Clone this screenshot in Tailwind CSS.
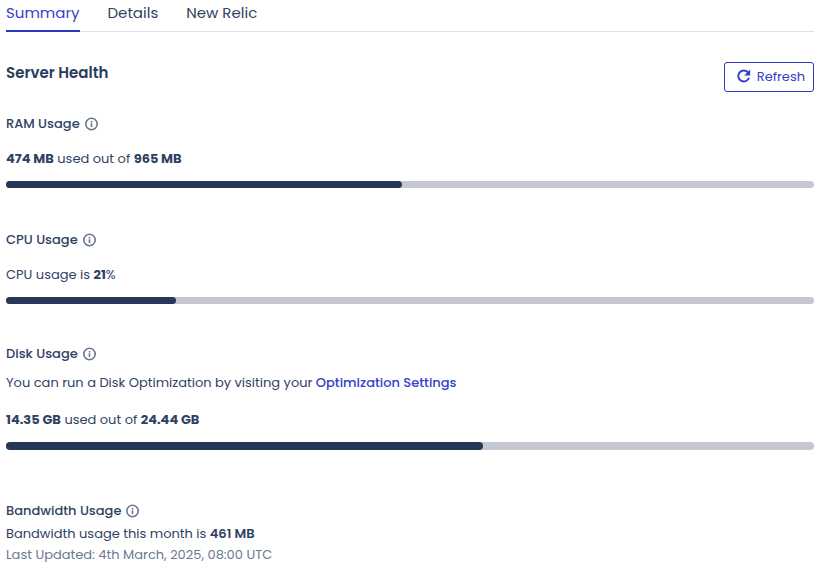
<!DOCTYPE html>
<html lang="en">
<head>
  <meta charset="UTF-8">
  <meta name="viewport" content="width=device-width, initial-scale=1.0">
  <title>Server Health</title>
  <script src="https://cdn.jsdelivr.net/npm/@tailwindcss/browser@4"></script>
</head>
<body class="bg-white pl-1.5 pr-[3px] font-[Poppins,Inter,sans-serif] text-[13px] leading-5 text-[#2f4263]">
  <svg class="hidden">
    <symbol id="info" viewBox="0 0 16 16">
      <circle cx="7.500" cy="8" r="5.700" fill="none" stroke="currentColor" stroke-width="1.600"/>
      <path fill="currentColor" d="M6.700 4.900h1.600v1.500H6.700zM6.700 7.300h1.600v3.800H6.700z"/>
    </symbol>
  </svg>

  <nav class="flex h-8 gap-7 border-b border-[#e0e1e6] text-[15px] leading-6">
    <a href="#summary" class="h-8 border-b-2 border-[#2c39bd] pt-px text-[#3640cc]">Summary</a>
    <a href="#details" class="pt-px">Details</a>
    <a href="#new-relic" class="pt-px">New Relic</a>
  </nav>

  <main>
    <header class="mt-[30px] flex items-start justify-between">
      <h1 class="text-[15px] leading-[22px] font-semibold text-[#293c5d]">Server Health</h1>
      <button type="button" class="flex h-[30px] items-center gap-1 rounded-[3px] border border-[#2c39bd] pr-2 pl-2.5 text-[#3640cc]">
        <svg class="size-[18px]" viewBox="0 0 18 18" fill="none">
          <path d="M13.200 4.700A5.500 5.500 0 1 0 14 9.700" stroke="currentColor" stroke-width="2"/>
          <path d="M15.200 1.500v6H9.200z" fill="currentColor"/>
        </svg>
        Refresh
      </button>
    </header>

    <section class="mt-[22px]">
      <h2 id="ram" class="flex items-center gap-1 font-medium">RAM Usage <svg class="size-4 text-[#68758e]"><use href="#info"/></svg></h2>
      <p class="mt-[15px]"><strong class="font-bold">474 MB</strong> used out of <strong class="font-bold">965 MB</strong></p>
      <div role="progressbar" aria-labelledby="ram" aria-valuenow="49" class="mt-3 h-[7px] rounded-full bg-[#c5c8d2]">
        <div class="h-full rounded-full bg-[#263858]" style="width: 49%"></div>
      </div>
    </section>

    <section class="mt-[42px]">
      <h2 id="cpu" class="flex items-center gap-1 font-medium">CPU Usage <svg class="size-4 text-[#68758e]"><use href="#info"/></svg></h2>
      <p class="mt-[15px]">CPU usage is <strong class="font-bold">21</strong>%</p>
      <div role="progressbar" aria-labelledby="cpu" aria-valuenow="21" class="mt-3 h-[7px] rounded-full bg-[#c5c8d2]">
        <div class="h-full rounded-full bg-[#263858]" style="width: 21%"></div>
      </div>
    </section>

    <section class="mt-10">
      <h2 id="disk" class="flex items-center gap-1 font-medium">Disk Usage <svg class="size-4 text-[#68758e]"><use href="#info"/></svg></h2>
      <p class="mt-[9px]">You can run a Disk Optimization by visiting your <a href="#optimization" class="font-medium text-[#3640cc]">Optimization Settings</a></p>
      <p class="mt-[17px]"><strong class="font-bold">14.35 GB</strong> used out of <strong class="font-bold">24.44 GB</strong></p>
      <div role="progressbar" aria-labelledby="disk" aria-valuenow="59" class="mt-3 h-2 rounded-full bg-[#c5c8d2]">
        <div class="h-full rounded-full bg-[#263858]" style="width: 59%"></div>
      </div>
    </section>

    <section class="mt-[51px]">
      <h2 class="flex items-center gap-1 font-medium">Bandwidth Usage <svg class="size-4 text-[#68758e]"><use href="#info"/></svg></h2>
      <p class="mt-[3px]">Bandwidth usage this month is <strong class="font-semibold">461 MB</strong></p>
      <p class="mt-px text-[#6b7890]">Last Updated: 4th March, 2025, 08:00 UTC</p>
    </section>
  </main>
</body>
</html>
